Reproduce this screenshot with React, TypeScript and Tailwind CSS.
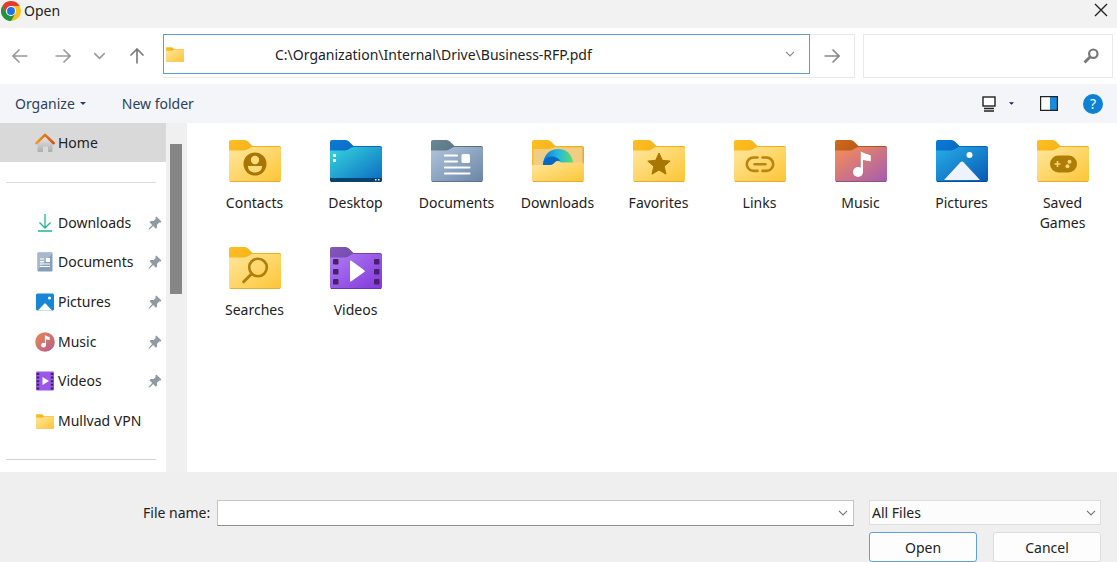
import type { ReactNode } from "react";
import clsx from "clsx";

type Palette = { tab: [string, string]; body: [string, string]; edge: string };

const YELLOW: Palette = { tab: ["#fcbf24", "#f5a90f"], body: ["#ffe79e", "#fdc535"], edge: "#e9ab35" };
const BROWN = "#a87605";

const PALETTES: Record<string, Palette> = {
  Desktop: { tab: ["#0b79d6", "#0a63bd"], body: ["#36d6df", "#0b69c0"], edge: "#0b4a7c" },
  Documents: { tab: ["#6c8794", "#4f6b78"], body: ["#b3c4db", "#6885a6"], edge: "#5b7490" },
  Music: { tab: ["#cd6a1c", "#a94f0f"], body: ["#f98e54", "#a45cb0"], edge: "#94507f" },
  Pictures: { tab: ["#0b7ad8", "#0a5cb4"], body: ["#27aee9", "#0858b0"], edge: "#0a4f9c" },
  Videos: { tab: ["#8458bd", "#6a429f"], body: ["#b07cf5", "#8138d8"], edge: "#6a2fb5" },
};

function MusicNote() {
  return (
    <g fill="#fff">
      <circle cx="23" cy="32" r="5" />
      <path d="M25.8 11.5c3.5 2 6.500 2.500 10 4v6c-3-.8-5.500-1-7.800-1.800V32h-2.200z" />
    </g>
  );
}

const EMBLEMS: Record<string, ReactNode> = {
  Contacts: (
    <>
      <circle cx="26" cy="24" r="11.500" fill={BROWN} />
      <circle cx="26" cy="20" r="4.200" fill="#ffdc7a" />
      <path d="M19 26h14c.3 4-3 6.500-7 6.500s-7.300-2.500-7-6.500z" fill="#ffdc7a" />
    </>
  ),
  Desktop: (
    <>
      <path d="M0 38h52v2a2 2 0 0 1-2 2H2a2 2 0 0 1-2-2z" fill="#08436e" />
      <path d="M3 14h3v3H3zM3 19h3v3H3z" fill="#fff" />
      <path d="M45 39h1.500v1.500H45zM48 39h1.500v1.500H48z" fill="#fff" />
    </>
  ),
  Documents: (
    <>
      <path d="M14 15.500h12M14 21.500h12M14 27.500h24.500M14 33.500h24.500" stroke="#fff" strokeWidth="2.200" strokeLinecap="round" />
      <rect x="30.500" y="14" width="8.500" height="9" rx="1.500" fill="#fff" />
    </>
  ),
  Favorites: (
    <path
      d="M26 13l3.300 7.300 7.900.8-6 5.200 1.800 7.900-7-4.200-7 4.200 1.800-7.900-6-5.200 7.900-.8z"
      fill={BROWN}
      stroke={BROWN}
      strokeLinejoin="round"
    />
  ),
  Links: (
    <path
      d="M23.500 17.500h-4a6.700 6.700 0 0 0 0 13.400h4M28.500 17.500h4a6.700 6.700 0 0 1 0 13.400h-4M20.500 24.200h11"
      fill="none"
      stroke="#b98511"
      strokeWidth="2.600"
      strokeLinecap="round"
    />
  ),
  Music: <MusicNote />,
  Pictures: (
    <>
      <circle cx="33.500" cy="15" r="3" fill="#fff" />
      <path d="M8 40l16.500-17.700q1.500-1.600 3 0L44 40z" fill="#eef2fd" />
    </>
  ),
  "Saved Games": (
    <>
      <rect x="13" y="15.500" width="27" height="17" rx="8.500" fill="#ad7d08" />
      <path d="M20.500 21v6M17.500 24h6" stroke="#f8d473" strokeWidth="1.600" />
      <circle cx="32.500" cy="21.800" r="2" fill="#f8d473" />
      <circle cx="30.500" cy="26.300" r="2" fill="#f8d473" />
    </>
  ),
  Searches: (
    <g fill="none" stroke="#b17d0a" strokeLinecap="round">
      <circle cx="29" cy="20.500" r="8.800" strokeWidth="2.600" />
      <path d="M22.700 26.800l-8 8" strokeWidth="3" />
    </g>
  ),
  Videos: (
    <>
      {[4, 45].map((x) =>
        [12, 22, 32].map((y) => <rect key={`${x}-${y}`} x={x - 1} y={y} width="5.500" height="5.500" rx="1" fill="#482168" />)
      )}
      <path d="M20 14.500v19q0 1.500 1.300.7l13-9.200q1.100-.9 0-1.800l-13-9.400q-1.300-.8-1.300.7z" fill="#fff" />
    </>
  ),
};

function FolderIcon({ name, className }: { name: string; className?: string }) {
  const { tab, body, edge } = PALETTES[name] ?? YELLOW;
  const id = name.replace(" ", "-").toLowerCase();
  return (
    <svg viewBox="0 0 52 42" className={clsx("shrink-0", className)} aria-hidden>
      <defs>
        <linearGradient id={`${id}-tab`} x1="0" y1="0" x2="1" y2="0.3">
          <stop stopColor={tab[0]} />
          <stop offset="1" stopColor={tab[1]} />
        </linearGradient>
        <linearGradient id={`${id}-body`} x1="0" y1="0" x2="1" y2="1">
          <stop stopColor={body[0]} />
          <stop offset="1" stopColor={body[1]} />
        </linearGradient>
        <linearGradient id={`${id}-swirl`}>
          <stop stopColor="#0a7ed4" />
          <stop offset="0.500" stopColor="#25b9dc" />
          <stop offset="1" stopColor="#5bdd70" />
        </linearGradient>
      </defs>
      <path
        d={
          name === "Downloads"
            ? "M0 2a2 2 0 0 1 2-2h13.500q2 0 3.500 1.500L23.500 6H50a2 2 0 0 1 2 2v20H0z"
            : "M0 2a2 2 0 0 1 2-2h13.500q2 0 3.500 1.500L23.500 6H50a2 2 0 0 1 2 2v8H0z"
        }
        fill={`url(#${id}-tab)`}
      />
      {name === "Downloads" ? (
        <>
          <path d="M1.500 9h15q2 0 3.500-1l2-.8h28.500V28h-49z" fill="#f0cc84" />
          <path d="M11 25.500C11 15.500 17.500 9 26 9s15 6 15 14.500H29c-.5-4-7-4-8 2z" fill={`url(#${id}-swirl)`} />
          <path d="M11 25.500c0-6 4-9 8.500-9 4 0 7 1.500 9 4.500-3.500-1-7 1-7.500 4.500z" fill="#0868c8" />
          <path d="M0 25h18q2 0 3.500-1.200T25 22.500h25a2 2 0 0 1 2 2V40a2 2 0 0 1-2 2H2a2 2 0 0 1-2-2z" fill={`url(#${id}-body)`} />
        </>
      ) : (
        <path
          d="M0 10.500h15q2.500 0 4.500-1.700t4-1.800H50a2 2 0 0 1 2 2v31a2 2 0 0 1-2 2H2a2 2 0 0 1-2-2z"
          fill={`url(#${id}-body)`}
        />
      )}
      <path d="M1 41.500h50" stroke={edge} />
      {EMBLEMS[name]}
    </svg>
  );
}

function ChromeLogo() {
  return (
    <svg viewBox="0 0 48 48" className="size-5" aria-hidden>
      <circle cx="24" cy="24" r="24" fill="#fbc116" />
      <path d="M24 12h20.800A24 24 0 0 0 3.200 12l10.400 18z" fill="#e33b2e" />
      <path d="M3.200 12A24 24 0 0 0 24 48l10.400-18L24 36 13.600 30z" fill="#229342" />
      <circle cx="24" cy="24" r="12" fill="#fff" />
      <circle cx="24" cy="24" r="9.500" fill="#1a73e8" />
    </svg>
  );
}

function Chevron({ className = "h-[6px] w-[10px]" }: { className?: string }) {
  return (
    <svg viewBox="0 0 10 6" className={className} fill="none" stroke="currentColor" strokeWidth="1.200" aria-hidden>
      <path d="M1 .8l4 4 4-4" />
    </svg>
  );
}

function Arrow({ className }: { className?: string }) {
  return (
    <svg viewBox="0 0 16 16" className={clsx("size-4", className)} fill="none" stroke="currentColor" strokeWidth="1.600" aria-hidden>
      <path d="M.5 8h14.500M8.500 1.500L15 8l-6.500 6.500" />
    </svg>
  );
}

function Pin() {
  return (
    <svg viewBox="0 0 14 14" className="size-[14px]" aria-label="Pinned">
      <path
        d="M8.300.5l5.200 5-1 1-1.200-.1-2.300 2.400.1 2.800-1.200 1.200-2.700-2.700-3.700 3.400-.8-.1v-.7L4.200 9 1.500 6.200 2.700 5l2.900.1L7.700 2.900 7.400 1.500z"
        fill="#8f9aa3"
      />
    </svg>
  );
}

const PLACE_ICONS: Record<string, ReactNode> = {
  Home: (
    <>
      <defs>
        <linearGradient id="roof" x1="0" x2="1">
          <stop stopColor="#f59a1b" />
          <stop offset="1" stopColor="#d64f16" />
        </linearGradient>
        <linearGradient id="walls" x1="0" y1="0" x2="0" y2="1">
          <stop stopColor="#ececec" />
          <stop offset="1" stopColor="#adadad" />
        </linearGradient>
      </defs>
      <path d="M2.500 9.500L10 2.500l7.500 7V18q0 1-1 1H13v-5.500H8V19H3.500q-1 0-1-1z" fill="url(#walls)" />
      <path d="M1.400 10.200L10 1.900l8.600 8.300" fill="none" stroke="url(#roof)" strokeWidth="2.600" strokeLinecap="round" strokeLinejoin="round" />
    </>
  ),
  Downloads: <path d="M10 1v14M4.500 9.500L10 15l5.500-5.500M3 18h14" fill="none" stroke="#22b58f" strokeWidth="1.300" />,
  Documents: (
    <>
      <rect x="2.500" y=".5" width="15" height="19" rx="1" fill="#879fbb" />
      <path d="M2.500 1.500q0-1 1-1h13q1 0 1 1L2.500 18z" fill="#a6b9cd" />
      <path d="M5 7h4M5 9.700h4M5 12h10M5 14.500h10" stroke="#fff" strokeWidth="1.200" />
      <rect x="11" y="6" width="4" height="4" fill="#fff" />
    </>
  ),
  Pictures: (
    <>
      <rect x="1" y="1.500" width="18" height="17" rx="1.500" fill="#1687d8" />
      <circle cx="14.500" cy="6" r="1.500" fill="#fff" />
      <path d="M3 18.500l6.300-6.800q.7-.7 1.400 0l6.300 6.800z" fill="#fff" />
    </>
  ),
  Music: (
    <>
      <defs>
        <linearGradient id="disc" x1="0" y1="0" x2="1" y2="1">
          <stop stopColor="#ee8850" />
          <stop offset="1" stopColor="#b25d91" />
        </linearGradient>
      </defs>
      <circle cx="10" cy="10" r="9.800" fill="url(#disc)" />
      <g transform="translate(-2.500 -2.200) scale(.48)">
        <MusicNote />
      </g>
    </>
  ),
  Videos: (
    <>
      <rect x="1" y=".5" width="18" height="19" rx="1" fill="#9a57e8" />
      <path d="M3 2v17M17 2v17" stroke="#43215f" strokeWidth="2.400" strokeDasharray="2 1.600" />
      <path d="M7.500 6v8l6.500-4z" fill="#fff" />
    </>
  ),
};

function Place({ name, pinned }: { name: string; pinned?: boolean }) {
  return (
    <button
      type="button"
      className={clsx("flex h-full w-full items-center gap-[3px] pr-1 pl-[35px] text-left", name === "Home" && "bg-[#d9d9d9]")}
    >
      {PLACE_ICONS[name] ? (
        <svg viewBox="0 0 20 20" className="size-5 shrink-0" aria-hidden>
          {PLACE_ICONS[name]}
        </svg>
      ) : (
        <FolderIcon name={name} className="mx-px h-[15px] w-[18px]" />
      )}
      <span className="grow whitespace-nowrap">{name}</span>
      {pinned && <Pin />}
    </button>
  );
}

const PLACES = ["Downloads", "Documents", "Pictures", "Music", "Videos", "Mullvad VPN"];
const FOLDERS = [
  "Contacts",
  "Desktop",
  "Documents",
  "Downloads",
  "Favorites",
  "Links",
  "Music",
  "Pictures",
  "Saved Games",
  "Searches",
  "Videos",
];

function NavigationBar() {
  return (
    <div className="flex h-14 items-start bg-white pt-[6px] pr-1">
      <div className="flex h-[44px] w-[163px] shrink-0 items-center justify-between pr-[18px] pl-3 text-[#9a9a9a]">
        <button type="button" aria-label="Back">
          <Arrow className="rotate-180" />
        </button>
        <button type="button" aria-label="Forward" className="ml-1">
          <Arrow />
        </button>
        <button type="button" aria-label="Recent locations">
          <Chevron className="h-[8px] w-[13px]" />
        </button>
        <button type="button" aria-label="Up" className="text-[#777]">
          <Arrow className="-rotate-90" />
        </button>
      </div>
      <div className="flex h-[44px] min-w-0 grow border border-l-0 border-[#e9e9e9]">
        <div className="-mt-px flex h-10 min-w-0 grow items-center border border-[#5a9fd4] pr-[14px] pl-[2px]">
          <FolderIcon name="Address" className="h-[15px] w-[18px]" />
          <input
            type="text"
            aria-label="Address"
            defaultValue="C:\Organization\Internal\Drive\Business-RFP.pdf"
            className="min-w-0 grow pt-[2px] pl-[91px] outline-none"
          />
          <button type="button" aria-label="Previous locations" className="text-[#888]">
            <Chevron />
          </button>
        </div>
        <button type="button" aria-label="Go" className="flex w-[44px] shrink-0 items-center justify-center text-[#888]">
          <Arrow />
        </button>
      </div>
      <div className="ml-2 flex h-[44px] w-[250px] shrink-0 items-center border border-[#e9e9e9] pr-[13px]">
        <input type="search" aria-label="Search" className="h-full min-w-0 grow px-2 outline-none" />
        <svg viewBox="0 0 16 16" className="size-4" fill="none" stroke="#777" aria-hidden>
          <circle cx="10.300" cy="5.700" r="4.200" strokeWidth="2.200" />
          <path d="M7 9l-5.500 5.500" strokeWidth="2.800" />
        </svg>
      </div>
    </div>
  );
}

function Toolbar() {
  return (
    <div className="flex h-[39px] items-center bg-[#f3f5f8] pr-[14px] pl-[15px] text-[#2b3f5e]">
      <button type="button" className="flex items-center gap-[5px]">
        Organize
        <svg viewBox="0 0 6 3" className="h-[3px] w-[6px]" fill="currentColor" aria-hidden>
          <path d="M0 0h6L3 3z" />
        </svg>
      </button>
      <button type="button" className="ml-9">
        New folder
      </button>
      <button type="button" aria-label="Change view" className="ml-auto flex items-center gap-[13px]">
        <svg viewBox="0 0 14 16" className="h-4 w-[14px]" fill="none" stroke="#222" strokeWidth="1.400" aria-hidden>
          <rect x="1" y="1" width="12" height="9" fill="#fff" />
          <path d="M2 12.500h10M2 15h10" />
        </svg>
        <svg viewBox="0 0 6 3" className="h-[3px] w-[5px]" fill="#17204a" aria-hidden>
          <path d="M0 0h6L3 3z" />
        </svg>
      </button>
      <button type="button" aria-label="Preview pane" className="ml-[26px]">
        <svg viewBox="0 0 18 15" className="h-[15px] w-[18px]" aria-hidden>
          <path d="M1 1h16v13H1z" fill="#fff" />
          <path d="M10 1h7v13h-7z" fill="#168cda" />
          <path d="M.6.600h16.800v13.800H.6z" fill="none" stroke="#222" strokeWidth="1.200" />
        </svg>
      </button>
      <button
        type="button"
        aria-label="Help"
        className="ml-[25px] flex size-5 items-center justify-center rounded-full bg-[#0e80d8] text-white"
      >
        ?
      </button>
    </div>
  );
}

export default function App() {
  return (
    <div className="min-h-screen bg-[#efefef] font-['Noto_Sans',sans-serif] text-[14px] leading-5 text-[#222]">
      <header className="flex h-7 items-start justify-between bg-[#f2f2f2] pr-[9px] pl-px">
        <div className="flex items-center gap-[3px]">
          <ChromeLogo />
          <h1 className="pt-px">Open</h1>
        </div>
        <button type="button" aria-label="Close" className="pt-[3px]">
          <svg viewBox="0 0 14 14" className="size-[14px]" stroke="#222" strokeWidth="1.400" aria-hidden>
            <path d="M1 1l12 12M13 1L1 13" />
          </svg>
        </button>
      </header>

      <NavigationBar />
      <Toolbar />

      <main className="flex bg-white">
        <nav className="w-[166px] shrink-0 pb-3" aria-label="Places">
          <div className="h-[39px]">
            <Place name="Home" />
          </div>
          <hr className="mt-5 mr-[10px] mb-5 ml-[6px] border-[#dcdcdc]" />
          <ul className="grid h-[238px] auto-rows-fr">
            {PLACES.map((name) => (
              <li key={name}>
                <Place name={name} pinned={name !== "Mullvad VPN"} />
              </li>
            ))}
          </ul>
          <hr className="mt-[18px] mr-[10px] ml-[6px] border-[#d4d4d4]" />
        </nav>
        <div className="w-[21px] shrink-0 bg-[#f0f0f0] pt-[21px] pl-1">
          <div className="h-[150px] w-3 bg-[#868686]" />
        </div>
        <ul className="flex min-w-0 grow flex-wrap content-start gap-y-[14px] pt-[17px] pl-[17px]">
          {FOLDERS.map((name) => (
            <li key={name} className="w-[101px]">
              <button type="button" className="flex w-full flex-col items-center gap-[11px] px-2">
                <FolderIcon name={name} className="h-[42px] w-[52px]" />
                <span className={clsx(name === "Saved Games" && "w-14")}>{name}</span>
              </button>
            </li>
          ))}
        </ul>
      </main>

      <footer className="grid grid-cols-[1fr_232px] gap-x-[15px] gap-y-[6px] pt-7 pr-4 pl-[143px]">
        <div className="flex items-center">
          <label htmlFor="file-name" className="w-[74px] shrink-0">
            File name:
          </label>
          <div className="flex h-[26px] grow items-center border border-[#c4c4c4] border-b-[#8f8f8f] bg-white pr-[5px]">
            <input id="file-name" type="text" className="h-full min-w-0 grow px-1 outline-none" />
            <button type="button" aria-label="Recent files" className="text-[#777]">
              <Chevron />
            </button>
          </div>
        </div>
        <div className="relative">
          <select
            aria-label="File type"
            className="h-[25px] w-full appearance-none border border-[#dedede] bg-[#fcfcfc] pl-[2px] outline-none"
          >
            <option>All Files</option>
          </select>
          <Chevron className="pointer-events-none absolute top-[10px] right-[5px] h-[6px] w-[10px] text-[#777]" />
        </div>
        <div className="col-start-2 grid grid-cols-2 gap-4">
          <button type="button" className="h-[30px] rounded-[3px] border border-[#5f9fd6] bg-[#fdfdfd] pt-[2px]">
            Open
          </button>
          <button type="button" className="h-[30px] rounded-[3px] border border-[#dcdcdc] bg-[#fdfdfd] pt-[2px]">
            Cancel
          </button>
        </div>
      </footer>
    </div>
  );
}
